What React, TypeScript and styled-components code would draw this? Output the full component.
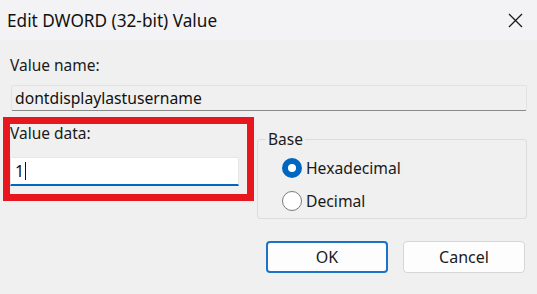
import React from "react";
import styled, { createGlobalStyle } from "styled-components";

const Global = createGlobalStyle`
  html, body { margin: 0; padding: 0; }
  body { background: #f0f0f0; font-family: "Noto Sans", "Open Sans", sans-serif; color: #1a1a1a; }
`;

const Window = styled.div`
  width: 537px;
  height: 294px;
  background: #f0f0f0;
  display: flex;
  flex-direction: column;
  overflow: hidden;
`;

const TitleBar = styled.div`
  height: 40px;
  flex: none;
  background: #f3f3f5;
  display: flex;
  align-items: center;
  justify-content: space-between;
  padding: 0 14px 0 7px;
  font-size: 17.2px;
  color: #111;
`;

const Close = styled.svg`
  width: 15px;
  height: 15px;
`;

const Body = styled.div`
  display: flex;
  flex-direction: column;
  padding: 0 10px 0 3px;
`;

const Label = styled.div<{ $top?: number; $indent?: number }>`
  font-size: 15.5px;
  line-height: 18px;
  margin-top: ${(p) => p.$top ?? 0}px;
  padding-left: ${(p) => p.$indent ?? 7}px;
  color: #1a1a1a;
`;

const NameField = styled.div`
  margin: 11px 0 0 8px;
  height: 26px;
  box-sizing: border-box;
  background: #f0f0f0;
  border: 1px solid #e2e2e2;
  border-bottom: 1px solid #8a8a8a;
  border-radius: 2px;
  font-size: 15.7px;
  line-height: 24px;
  padding-left: 3px;
  color: #111;
`;

const Row = styled.div`
  display: flex;
  align-items: flex-start;
  margin-top: 6px;
`;

const Highlight = styled.div`
  width: 251px;
  height: 84px;
  box-sizing: border-box;
  border: 7px solid #e8161f;
  display: flex;
  flex-direction: column;
`;

const DataField = styled.div`
  margin-top: 15px;
  width: 229px;
  height: 29px;
  box-sizing: border-box;
  background: #fff;
  border: 1px solid #e6e6e6;
  border-bottom: 2px solid #0067c0;
  border-radius: 2px 2px 0 0;
  display: flex;
  align-items: center;
  padding-left: 4px;
  font-size: 16px;
  color: #111;
`;

const Caret = styled.span`
  display: inline-block;
  width: 1px;
  height: 18px;
  background: #111;
  margin-left: 1px;
`;

const Group = styled.fieldset`
  margin: 11px 0 0 3px;
  padding: 7px 0 0 24px;
  width: 270px;
  height: 91px;
  box-sizing: border-box;
  border: 1px solid #dcdcdc;
  border-radius: 3px;
  display: flex;
  flex-direction: column;
  gap: 11px;
`;

const Legend = styled.legend`
  font-size: 15.5px;
  padding: 0 2px;
  margin-left: -16px;
  color: #1a1a1a;
`;

const RadioRow = styled.label`
  display: flex;
  align-items: center;
  gap: 4px;
  font-size: 15.7px;
  height: 22px;
  color: #1a1a1a;
`;

const Radio = styled.span<{ $on?: boolean }>`
  width: 20px;
  height: 20px;
  box-sizing: border-box;
  border-radius: 50%;
  flex: none;
  display: flex;
  align-items: center;
  justify-content: center;
  ${(p) =>
    p.$on
      ? `background: #0067c0; border: none;`
      : `background: #fff; border: 1.5px solid #7a7a7a;`}
  &::after {
    content: "";
    display: ${(p) => (p.$on ? "block" : "none")};
    width: 8px;
    height: 8px;
    border-radius: 50%;
    background: #fff;
  }
`;

const Buttons = styled.div`
  display: flex;
  justify-content: flex-end;
  gap: 15px;
  margin-top: 22px;
  padding-right: 2px;
`;

const Button = styled.button<{ $primary?: boolean }>`
  width: 122px;
  height: 32px;
  box-sizing: border-box;
  background: #fdfdfd;
  border: ${(p) => (p.$primary ? "2px solid #1a73c8" : "1.5px solid #d6d6d6")};
  border-radius: 4px;
  font-family: inherit;
  font-size: 16px;
  color: #1a1a1a;
  padding: 0;
`;

export default function App() {
  return (
    <>
      <Global />
      <Window>
        <TitleBar>
          <span>Edit DWORD (32-bit) Value</span>
          <Close viewBox="0 0 15 15">
            <path d="M1 1 L14 14 M14 1 L1 14" stroke="#1a1a1a" strokeWidth="1.3" fill="none" />
          </Close>
        </TitleBar>
        <Body>
          <Label $top={16}>Value name:</Label>
          <NameField>dontdisplaylastusername</NameField>
          <Row>
            <Highlight>
              <Label $top={0} $indent={0}>Value data:</Label>
              <DataField>
                1<Caret />
              </DataField>
            </Highlight>
            <Group>
              <Legend>Base</Legend>
              <RadioRow>
                <Radio $on />
                Hexadecimal
              </RadioRow>
              <RadioRow>
                <Radio />
                Decimal
              </RadioRow>
            </Group>
          </Row>
          <Buttons>
            <Button $primary>OK</Button>
            <Button>Cancel</Button>
          </Buttons>
        </Body>
      </Window>
    </>
  );
}
